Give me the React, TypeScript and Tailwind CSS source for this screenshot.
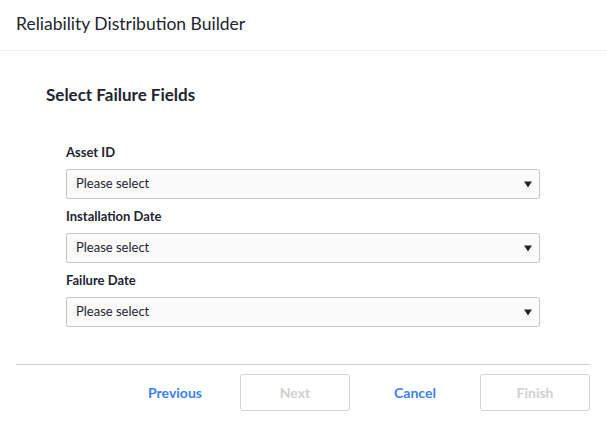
const fields = ["Asset ID", "Installation Date", "Failure Date"];

function SelectBox() {
  return (
    <div className="flex h-[30px] w-[474px] items-center justify-between rounded-[2px] border border-[#c8c8c8] bg-[#fafafa] pl-[9px] pr-[7px] text-[13px] text-[#1d2530]">
      <span>Please select</span>
      <svg width="8" height="7" viewBox="0 0 8 7" className="mt-[1px]">
        <path d="M0 0.5 L8 0.5 L4 6.5 Z" fill="#222" />
      </svg>
    </div>
  );
}

export default function App() {
  return (
    <div
      className="h-[441px] w-[607px] bg-white text-[#1d2530]"
      style={{ fontFamily: "Lato, 'Open Sans', sans-serif" }}
    >
      <header className="flex h-[51px] items-center border-b border-[#ececec] pb-[2px] pl-4">
        <h1 className="text-[17.5px] font-normal">Reliability Distribution Builder</h1>
      </header>

      <section className="px-4">
        <h2 className="mt-[31px] pl-[30px] text-[17px] font-bold">Select Failure Fields</h2>

        <div className="mt-[36px] flex flex-col pl-[50px]">
          {fields.map((f) => (
            <div key={f} className="flex flex-col">
              <label className="mb-[8px] h-[17px] text-[13px] font-bold leading-[17px]">{f}</label>
              <SelectBox />
              <div className="h-[9px]" />
            </div>
          ))}
        </div>

        <div className="mt-[28px] mr-[1px] border-t border-[#cfcfcf]" />

        <div className="mt-[9px] flex justify-end gap-[10px] pr-[1px] text-[14px] font-bold">
          <button className="h-[37px] w-[110px] text-[#3b82e6]">Previous</button>
          <button className="h-[37px] w-[110px] rounded-[3px] border border-[#d3d3d3] text-[#cfcfcf]">Next</button>
          <button className="h-[37px] w-[110px] text-[#3b82e6]">Cancel</button>
          <button className="h-[37px] w-[110px] rounded-[3px] border border-[#d3d3d3] text-[#cfcfcf]">Finish</button>
        </div>
      </section>
    </div>
  );
}
